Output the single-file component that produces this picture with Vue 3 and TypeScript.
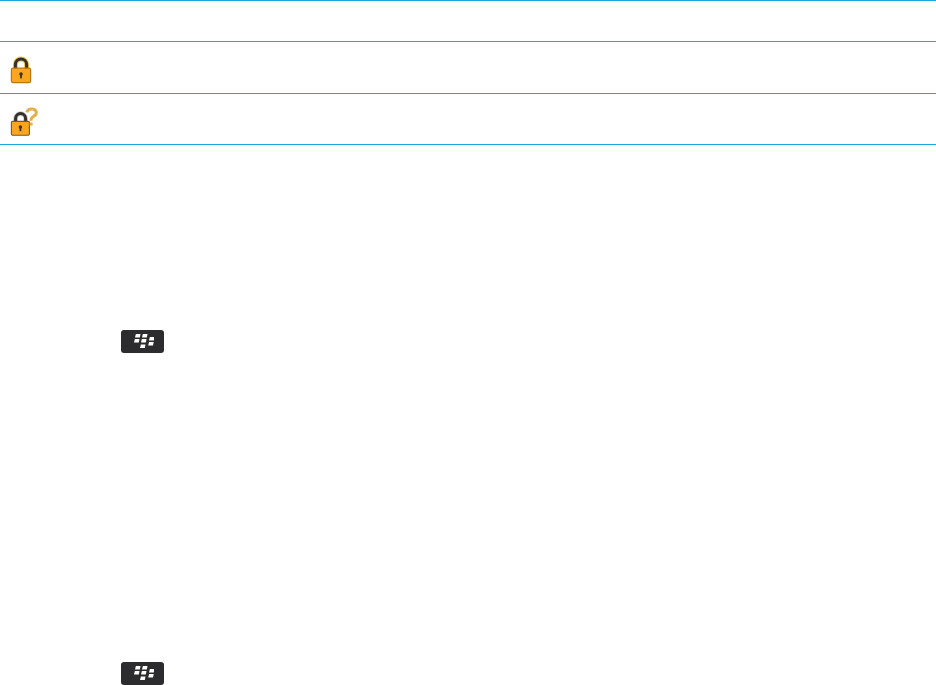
<script setup lang="ts">
const dots: [number, number][] = [
  [1, 0], [8, 0], [0, 5], [7, 5], [15, 3], [14.2, 8], [6, 10.4],
];
const dotPath = (x: number, y: number): string =>
  `M${x + 0.9} ${y}h4.6l-.7 3.5h-4.8z`;
</script>

<template>
  <main class="page">
    <section class="table">
      <div class="row first"></div>
      <div class="row second">
        <svg class="lock" width="22" height="28" viewBox="0 0 22 28">
          <path d="M5.4 14V8.5a5.6 5.6 0 0 1 11.2 0V14" fill="none" stroke="#f6c544" stroke-width="5" />
          <path d="M5.4 14V8.5a5.6 5.6 0 0 1 11.2 0V14" fill="none" stroke="#34302b" stroke-width="3" />
          <rect x="1.4" y="12.2" width="19.2" height="14.4" rx="1.6" fill="#fba61c" stroke="#b9770f" stroke-width="1.2" />
          <circle cx="11" cy="18" r="1.8" fill="#40321c" />
          <rect x="10.1" y="18" width="1.8" height="4.4" fill="#40321c" />
        </svg>
      </div>
      <div class="row third">
        <svg class="lock" width="30" height="30" viewBox="0 0 30 30">
          <path d="M5.6 17v-5.4a5 5 0 0 1 10 0V17" fill="none" stroke="#cfcac2" stroke-width="4.6" />
          <path d="M5.6 17v-5.4a5 5 0 0 1 10 0V17" fill="none" stroke="#34302b" stroke-width="3" />
          <rect x="1.4" y="14.4" width="18" height="13.8" rx="1.2" fill="#fba61c" stroke="#6d5a3a" stroke-width="1.1" />
          <circle cx="10.4" cy="20" r="1.7" fill="#40321c" />
          <rect x="9.5" y="20" width="1.8" height="4.2" fill="#40321c" />
          <path d="M16.8 5.4c.8-2.4 3-3.6 5.4-3.4 2.8.2 4.4 2 4.1 4.2-.3 2.4-3.9 3.2-4.9 5.2-.3.7-.4 1.4-.4 2.4" fill="none" stroke="#e4ae4c" stroke-width="3" />
          <rect x="19.6" y="15.6" width="3" height="3" fill="#e4ae4c" />
        </svg>
      </div>
    </section>

    <div class="key key-a" role="img" aria-label="BlackBerry key">
      <svg width="20" height="14" viewBox="0 0 20 14">
        <path v-for="(d, i) in dots" :key="i" :d="dotPath(d[0], d[1])" fill="#fff" />
      </svg>
    </div>
    <div class="key key-b" role="img" aria-label="BlackBerry key">
      <svg width="20" height="14" viewBox="0 0 20 14">
        <path v-for="(d, i) in dots" :key="i" :d="dotPath(d[0], d[1])" fill="#fff" />
      </svg>
    </div>
  </main>
</template>

<style scoped>
.page {
  width: 936px;
  height: 685px;
  overflow: hidden;
  background: #fff;
  font-family: "Liberation Sans", sans-serif;
}
.table {
  display: flex;
  flex-direction: column;
  border-top: 1px solid #1aa9dc;
}
.row {
  display: flex;
  align-items: flex-start;
  padding-left: 10px;
  border-bottom: 1px solid #1aa9dc;
  box-sizing: border-box;
}
.first {
  height: 41px;
}
.second {
  height: 52px;
  padding-top: 14px;
}
.third {
  height: 51px;
  padding-top: 13px;
}
.lock {
  display: block;
}
.key {
  width: 43px;
  height: 23px;
  box-sizing: border-box;
  padding: 0 0 1px 2px;
  margin-left: 121px;
  background: #2c2c2e;
  border-radius: 3px;
  display: flex;
  align-items: center;
  justify-content: center;
}
.key-a {
  margin-top: 185px;
}
.key-b {
  margin-top: 309px;
}
</style>
